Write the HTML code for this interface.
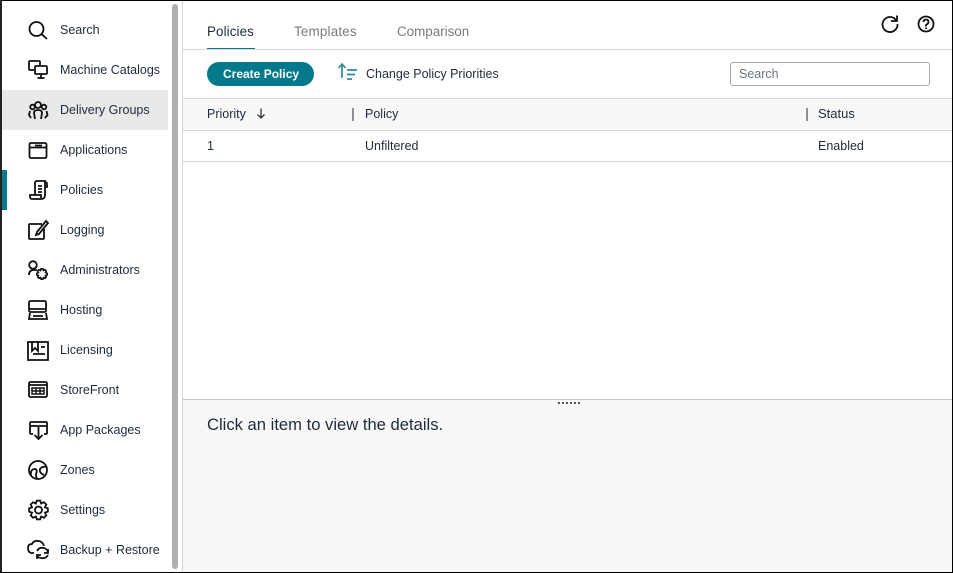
<!DOCTYPE html>
<html><head><meta charset="utf-8"><style>
html,body{margin:0;padding:0;background:#fff}
body{width:953px;height:573px;position:relative;overflow:hidden;font-family:"Liberation Sans",sans-serif;color:#1f2b3a;font-size:12.5px}
.a{position:absolute}
.t{position:absolute;white-space:nowrap;line-height:16px}
.tab{font-size:13.4px}
svg{position:absolute;overflow:visible;fill:none;stroke:#111;stroke-width:1.8}
</style></head><body>
<div class="a" style="left:2px;top:90px;width:166px;height:40px;background:#e9e9e9"></div>
<div class="a" style="left:2px;top:170px;width:5px;height:40px;background:#037a8c"></div>
<div class="a" style="left:172px;top:4px;width:6px;height:565px;background:#b0b0b0;border-radius:3px"></div>
<div class="a" style="left:182px;top:1px;width:1px;height:571px;background:#d4d4d4"></div>

<div class="t" style="left:60px;top:21.500px">Search</div>
<div class="t" style="left:60px;top:61.500px">Machine Catalogs</div>
<div class="t" style="left:60px;top:101.500px">Delivery Groups</div>
<div class="t" style="left:60px;top:141.500px">Applications</div>
<div class="t" style="left:60px;top:181.500px">Policies</div>
<div class="t" style="left:60px;top:221.500px">Logging</div>
<div class="t" style="left:60px;top:261.500px">Administrators</div>
<div class="t" style="left:60px;top:301.500px">Hosting</div>
<div class="t" style="left:60px;top:341.500px">Licensing</div>
<div class="t" style="left:60px;top:381.500px">StoreFront</div>
<div class="t" style="left:60px;top:421.500px">App Packages</div>
<div class="t" style="left:60px;top:461.500px">Zones</div>
<div class="t" style="left:60px;top:501.500px">Settings</div>
<div class="t" style="left:60px;top:541.500px">Backup + Restore</div>

<svg style="left:0;top:0" width="183" height="573">
<defs><path id="g" d="M9.36-1.65L9.36 1.65L6.47 2.68L7.78 5.45L5.45 7.78L2.68 6.47L1.65 9.36L-1.65 9.36L-2.68 6.47L-5.45 7.78L-7.78 5.45L-6.47 2.68L-9.36 1.65L-9.36-1.65L-6.47-2.68L-7.78-5.45L-5.45-7.78L-2.68-6.47L-1.65-9.36L1.65-9.36L2.68-6.47L5.45-7.78L7.78-5.45L6.47-2.68Z"/></defs>
<circle cx="36.500" cy="29" r="7"/><path d="M41.500 34L47 39"/>
<path d="M34 70H30Q29 70 29 69V62Q29 61 30 61H39Q40 61 40 62V65M36 66H46Q47 66 47 67V73Q47 74 46 74H36Q35 74 35 73V67Q35 66 36 66ZM41 74V78M37.500 78H44.500"/>
<circle cx="38" cy="105" r="3"/><circle cx="32.500" cy="107" r="2.300"/><circle cx="44" cy="107" r="2.300"/><path d="M35 119L34 113Q34 110 38 110Q42 110 42 113L41 119M31 118L29 115L30 111M45 118L47.500 115L46.500 111"/>
<rect x="29.500" y="143" width="17" height="15" rx="1.500"/><path d="M29.500 147.500H46.500M35 145.500H42" />
<path d="M35 195V183Q35 181 37 181H45V195Q45 199 41 199H32Q30 199 30 196V195H41V198M45 182Q47 182 47 184V187H45M38 186H42M38 189H42M38 192H42" />
<path d="M42 224H30Q29 224 29 225V238Q29 239 30 239H43Q44 239 44 238V229M37 232L46 221L48 223L39 234L36 235Z"/>
<circle cx="33" cy="265" r="3.800"/><path d="M29 275Q29 270 34 270H37"/><use href="#g" transform="translate(42 274) scale(.55)" stroke-width="3"/>
<rect x="29" y="301" width="17" height="11" rx="1.500"/><path d="M29 309H46M30 313L29 319H47L46 313M33 316H43"/>
<path d="M28 342H48V360H28ZM32 341V351L35 348L38 351V341M41 347H45M33 354H45"/>
<rect x="29" y="382" width="18" height="15" rx="1.500"/><path d="M29 385H47"/><path d="M32 388H44V394H32ZM36 388V394M40 388V394M32 391H44" stroke-width="1.500"/>
<path d="M33 434H31Q30 434 30 433V423Q30 422 31 422H46Q47 422 47 423V433Q47 434 46 434H44M30 426H47M38.500 427V439M34.500 435L38.500 439L42.500 435"/>
<circle cx="38" cy="470" r="9"/><path d="M31 476Q30 469 35 469Q38 470 36 474Q36 477 37 479M47 467Q42 466 40 469Q39 473 44 475"/>
<use href="#g" transform="translate(38.500 510)"/><circle cx="38.500" cy="510" r="3.500"/>
<path d="M34 553H31Q28 552 28 548Q28 544 32 544Q34 540 39 541Q43 542 44 546M37 551Q39 547 44 548Q47 549 48 552M48 549V553H44M48 555Q46 559 41 558Q38 558 37 555M37 559V555H41"/>
</svg>

<div class="t tab" style="left:207px;top:23.500px;color:#1f2b3a;letter-spacing:.1px">Policies</div>
<div class="t tab" style="left:294px;top:23.500px;color:#7b7b7b;letter-spacing:.2px">Templates</div>
<div class="t tab" style="left:397px;top:23.500px;color:#7b7b7b">Comparison</div>
<div class="a" style="left:207px;top:48px;width:48px;height:2px;background:#037a8c"></div>
<div class="a" style="left:183px;top:49px;width:769px;height:1px;background:#d8d8d8"></div>
<svg style="left:0;top:0" width="953" height="60">
<path d="M896 20A7.500 7.500 0 1 0 897.500 24" /><path d="M891 21H897V15.500" />
<circle cx="926" cy="24" r="7.500"/><path d="M923.500 22Q923.500 19.500 926 19.500Q928.500 19.500 928.500 22Q928.500 23.500 926 25V26.500M926 27.500V29"/>
</svg>

<div class="a" style="left:207px;top:62px;width:107px;height:24px;border-radius:12px;background:#037a8c"></div>
<div class="t" style="left:223px;top:66px;color:#fff;font-weight:bold;font-size:12px">Create Policy</div>
<svg style="left:0;top:0" width="400" height="100" >
<path d="M342 78V65M338.500 68L342 64L345.500 68M347 70H357M347 74.500H355M347 79H352" stroke="#2f8a99" stroke-width="1.700" />
</svg>
<div class="t" style="left:366px;top:66px">Change Policy Priorities</div>
<div class="a" style="left:730px;top:62px;width:198px;height:22px;border:1px solid #a9a9a9;border-radius:3px"></div>
<div class="t" style="left:739px;top:65.500px;color:#6e7480">Search</div>

<div class="a" style="left:183px;top:98px;width:769px;height:31px;background:#f8f8f8;border-top:1px solid #d8d8d8;border-bottom:1px solid #d8d8d8"></div>
<div class="t" style="left:207px;top:105.500px">Priority</div>
<svg style="left:0;top:0" width="300" height="130"><path d="M261 108.500V118M257.500 114.500L261 118L264.500 114.500" stroke="#333" stroke-width="1.300"/></svg>
<div class="a" style="left:352px;top:108px;width:2px;height:13px;background:#8f8f8f"></div>
<div class="t" style="left:365px;top:105.500px">Policy</div>
<div class="a" style="left:806px;top:108px;width:2px;height:13px;background:#8f8f8f"></div>
<div class="t" style="left:818px;top:105.500px;font-size:13px">Status</div>

<div class="t" style="left:207px;top:137.500px">1</div>
<div class="t" style="left:365px;top:137.500px">Unfiltered</div>
<div class="t" style="left:818px;top:137.500px">Enabled</div>
<div class="a" style="left:183px;top:161px;width:769px;height:1px;background:#d8d8d8"></div>

<div class="a" style="left:183px;top:399px;width:769px;height:173px;background:#f8f8f8;border-top:1px solid #c9c9c9;box-sizing:border-box"></div>
<div class="a" style="left:558px;top:402px;width:22px;height:2px;background:repeating-linear-gradient(90deg,#555 0 2px,transparent 2px 4px)"></div>
<div class="t" style="left:207px;top:415.500px;font-size:16.6px;line-height:18px">Click an item to view the details.</div>

<div class="a" style="left:0;top:0;width:953px;height:1px;background:#000"></div>
<div class="a" style="left:0;top:0;width:2px;height:573px;background:#222"></div>
<div class="a" style="left:952px;top:0;width:1px;height:573px;background:#000"></div>
<div class="a" style="left:0;top:572px;width:953px;height:1px;background:#000"></div>
</body></html>
